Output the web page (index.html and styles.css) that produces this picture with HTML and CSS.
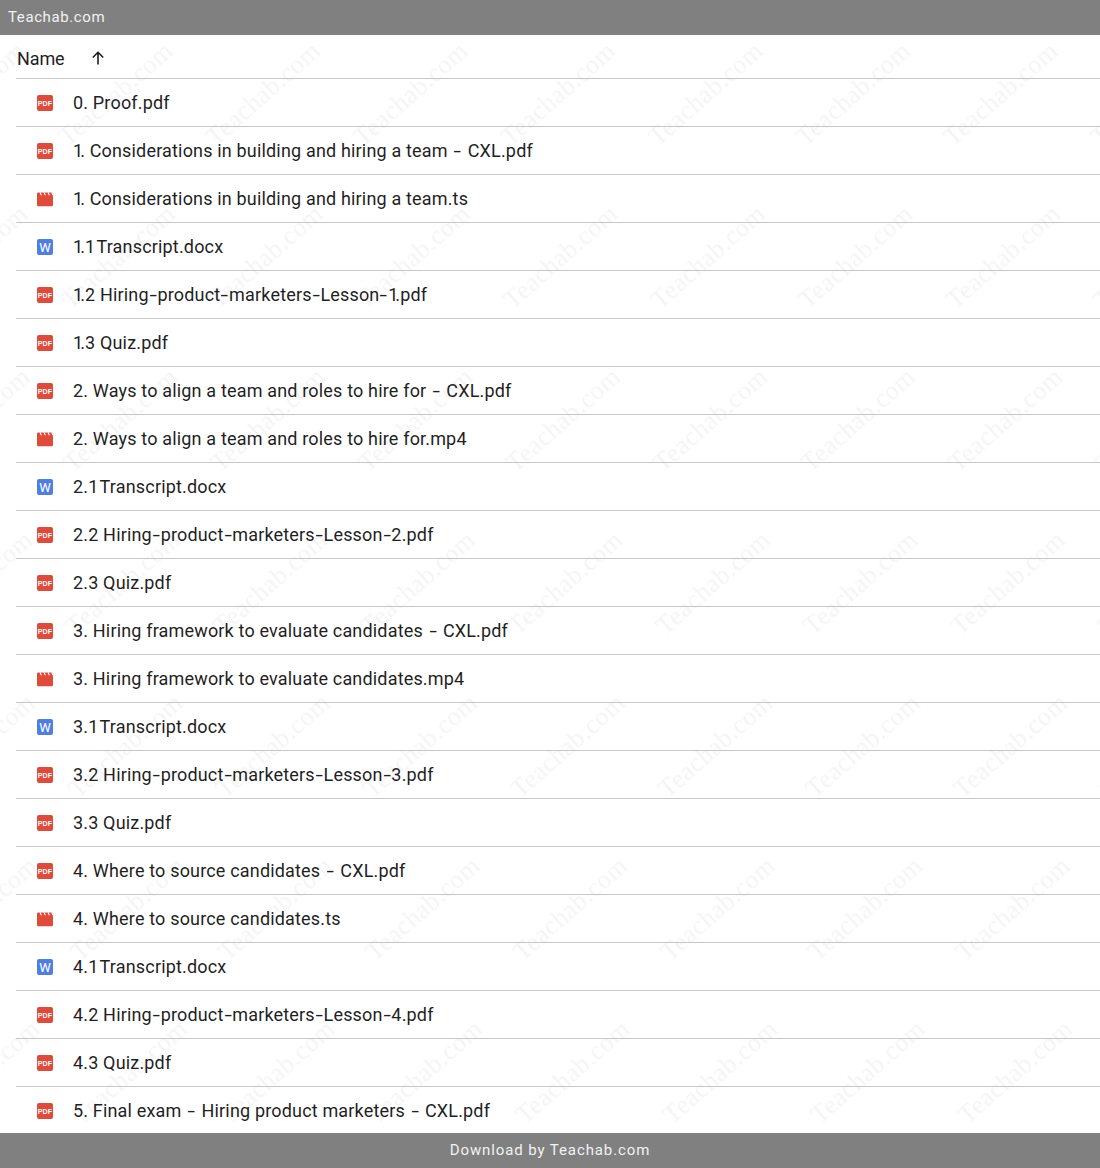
FILE: index.html
```html
<!DOCTYPE html>
<html lang="en">
<head>
  <meta charset="UTF-8" />
  <title>Teachab.com</title>
  <link rel="stylesheet" href="styles.css">
</head>
<body>
  <svg width="0" height="0" class="defs">
    <symbol id="pdf" viewBox="0 0 16 16">
      <rect width="16" height="16" rx="2" fill="#e04a3a"/>
      <text x="8" y="10.700" text-anchor="middle" class="pdf-label">PDF</text>
    </symbol>
    <symbol id="video" viewBox="0 0 16 16">
      <path d="M1.200 1.500h13.600a1.200 1.200 0 0 1 1.200 1.200V14a1.200 1.200 0 0 1-1.200 1.200H1.200A1.200 1.200 0 0 1 0 14V2.700a1.200 1.200 0 0 1 1.200-1.200z" fill="#e04a3a"/>
      <path d="M3 1.300l1.300 3M7 1.300l1.300 3M11 1.300l1.300 3M14.800 1.300l1.200 3" fill="none" stroke="white" stroke-width="1.100"/>
    </symbol>
    <symbol id="word" viewBox="0 0 16 16">
      <rect width="16" height="16" rx="2" fill="#4f7fe3"/>
      <text x="8" y="12.800" text-anchor="middle" class="word-label">W</text>
    </symbol>
  </svg>

  <!-- watermark layer, behind the list -->
  <svg class="watermark" width="1100" height="1168">
    <defs>
      <pattern id="wm" width="147.500" height="163" patternUnits="userSpaceOnUse" patternTransform="translate(52 15) skewX(0.850)">
        <text transform="translate(14 132) rotate(-41)" class="wm-text">Teachab.com</text>
      </pattern>
    </defs>
    <rect width="1100" height="1168" fill="url(#wm)"/>
  </svg>

  <div class="topbar">Teachab.com</div>

  <div class="list">
    <div class="list-head">
      <span class="head-name">Name</span>
      <svg class="sort-arrow" viewBox="0 0 16 16" width="16" height="16"><path d="M8 14.500V2.500M2.800 7.500 8 2.300l5.200 5.200" fill="none" stroke="#1f1f1f" stroke-width="1.600"/></svg>
    </div>
    <div class="row"><svg class="ico"><use href="#pdf"/></svg><span>0. Proof.pdf</span></div>
    <div class="row"><svg class="ico"><use href="#pdf"/></svg><span><span class="one">1</span>. Considerations in building and hiring a team <span class="dash">-</span> CXL.pdf</span></div>
    <div class="row"><svg class="ico"><use href="#video"/></svg><span><span class="one">1</span>. Considerations in building and hiring a team.ts</span></div>
    <div class="row"><svg class="ico"><use href="#word"/></svg><span><span class="one">1</span>.<span class="one">1</span> Transcript.docx</span></div>
    <div class="row"><svg class="ico"><use href="#pdf"/></svg><span><span class="one">1</span>.2 Hiring<span class="hy">-</span>product<span class="hy">-</span>marketers<span class="hy">-</span>Lesson<span class="hy">-</span><span class="one">1</span>.pdf</span></div>
    <div class="row"><svg class="ico"><use href="#pdf"/></svg><span><span class="one">1</span>.3 Quiz.pdf</span></div>
    <div class="row"><svg class="ico"><use href="#pdf"/></svg><span>2. Ways to align a team and roles to hire for <span class="dash">-</span> CXL.pdf</span></div>
    <div class="row"><svg class="ico"><use href="#video"/></svg><span>2. Ways to align a team and roles to hire for.mp4</span></div>
    <div class="row"><svg class="ico"><use href="#word"/></svg><span>2.<span class="one">1</span> Transcript.docx</span></div>
    <div class="row"><svg class="ico"><use href="#pdf"/></svg><span>2.2 Hiring<span class="hy">-</span>product<span class="hy">-</span>marketers<span class="hy">-</span>Lesson<span class="hy">-</span>2.pdf</span></div>
    <div class="row"><svg class="ico"><use href="#pdf"/></svg><span>2.3 Quiz.pdf</span></div>
    <div class="row"><svg class="ico"><use href="#pdf"/></svg><span>3. Hiring framework to evaluate candidates <span class="dash">-</span> CXL.pdf</span></div>
    <div class="row"><svg class="ico"><use href="#video"/></svg><span>3. Hiring framework to evaluate candidates.mp4</span></div>
    <div class="row"><svg class="ico"><use href="#word"/></svg><span>3.<span class="one">1</span> Transcript.docx</span></div>
    <div class="row"><svg class="ico"><use href="#pdf"/></svg><span>3.2 Hiring<span class="hy">-</span>product<span class="hy">-</span>marketers<span class="hy">-</span>Lesson<span class="hy">-</span>3.pdf</span></div>
    <div class="row"><svg class="ico"><use href="#pdf"/></svg><span>3.3 Quiz.pdf</span></div>
    <div class="row"><svg class="ico"><use href="#pdf"/></svg><span>4. Where to source candidates <span class="dash">-</span> CXL.pdf</span></div>
    <div class="row"><svg class="ico"><use href="#video"/></svg><span>4. Where to source candidates.ts</span></div>
    <div class="row"><svg class="ico"><use href="#word"/></svg><span>4.<span class="one">1</span> Transcript.docx</span></div>
    <div class="row"><svg class="ico"><use href="#pdf"/></svg><span>4.2 Hiring<span class="hy">-</span>product<span class="hy">-</span>marketers<span class="hy">-</span>Lesson<span class="hy">-</span>4.pdf</span></div>
    <div class="row"><svg class="ico"><use href="#pdf"/></svg><span>4.3 Quiz.pdf</span></div>
    <div class="row"><svg class="ico"><use href="#pdf"/></svg><span>5. Final exam <span class="dash">-</span> Hiring product marketers <span class="dash">-</span> CXL.pdf</span></div>
  </div>

  <div class="bottombar">Download by Teachab.com</div>
</body>
</html>
```

FILE: styles.css
```css
body {
  margin: 0;
  font-family: Roboto, sans-serif;
  color: #1f1f1f;
  background-color: white;
  height: 1168px;
  overflow: hidden;
  position: relative;
  display: flex;
  flex-direction: column;
}
.defs {
  position: absolute;
}
.topbar {
  flex: none;
  height: 35px;
  line-height: 35px;
  padding-left: 8px;
  background-color: #808080;
  color: #f2f2f2;
  font-size: 15px;
  letter-spacing: 0.600px;
  position: relative;
}
.list {
  flex: 1;
  min-height: 0;
  overflow: hidden;
  padding-left: 16px;
  position: relative;
}
.list-head {
  height: 44px;
  box-sizing: border-box;
  padding-top: 3px;
  border-bottom: 1px solid #c7c7c7;
  display: flex;
  align-items: center;
  font-size: 18px;
  letter-spacing: -0.100px;
}
.head-name {
  width: 73px;
  padding-left: 1px;
}
.sort-arrow {
  margin-top: -1px;
}
.row {
  height: 48px;
  box-sizing: border-box;
  border-bottom: 1px solid #c7c7c7;
  display: flex;
  align-items: center;
  font-size: 18px;
  letter-spacing: 0.170px;
}
.one {
  letter-spacing: -3px;
}
.dash {
  display: inline-block;
  padding: 0 2.800px;
  transform: scaleX(1.500);
}
.hy {
  display: inline-block;
  padding: 0 1.800px;
  transform: scaleX(1.500);
}
.ico {
  width: 16px;
  height: 16px;
  margin-left: 21px;
  margin-right: 20px;
  flex: none;
}
.pdf-label {
  font: bold 7px "Liberation Sans", sans-serif;
  fill: white;
}
.word-label {
  font: 13px Roboto, sans-serif;
  fill: white;
}
.bottombar {
  flex: none;
  height: 35px;
  line-height: 35px;
  text-align: center;
  background-color: #808080;
  color: #f2f2f2;
  font-size: 15px;
  letter-spacing: 0.900px;
  position: relative;
}
.watermark {
  position: absolute;
  top: 0;
  left: 0;
}
.wm-text {
  font: 26px "Liberation Serif", serif;
  letter-spacing: 0.500px;
  fill: rgba(0, 0, 0, 0.045);
}
```
